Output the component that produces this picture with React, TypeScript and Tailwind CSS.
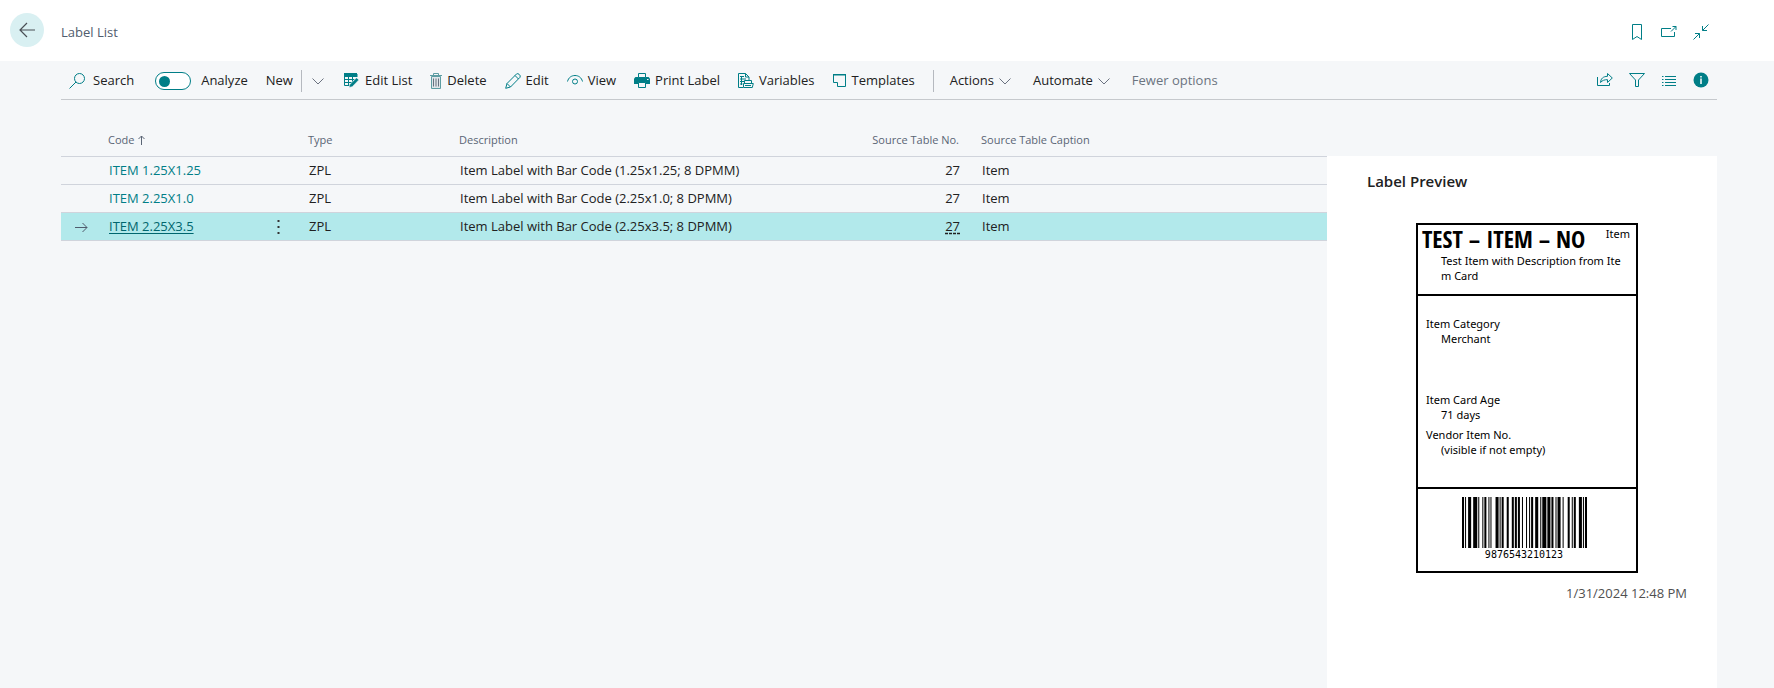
import type { ReactNode } from "react";

const svgProps = {
  width: 16,
  height: 16,
  viewBox: "0 0 16 16",
  fill: "none",
  stroke: "currentColor",
  strokeWidth: 1,
  "aria-hidden": true,
} as const;

const SearchIcon = () => (
  <svg {...svgProps}>
    <circle cx="10.5" cy="5.5" r="5" />
    <path d="M7 9 .5 15.5" />
  </svg>
);

const EditListIcon = () => (
  <svg {...svgProps}>
    <path d="M.5 1v11.5H7M.5 6.5h10M.5 9.5h8M4.5 4v8.5M8.500 4v6M13 1v3" />
    <path d="M0 0h13v4H0z" fill="currentColor" stroke="none" />
    <path d="m5 14.500.8-3L12.600 4.700l2.200 2.200-6.500 6.800z" fill="currentColor" stroke="#f5f7f9" strokeWidth=".6" />
  </svg>
);

const TrashIcon = () => (
  <svg {...svgProps} width={12} viewBox="0 0 12 16">
    <path d="M1.500 3.500h9v12h-9z" fill="#dfe6ea" stroke="#5d9da3" />
    <path d="M0 2.500h12M3.500 2V.5h5V2" stroke="#5d9da3" />
    <path d="M3.500 5.500v8M6 5.500v8M8.500 5.500v8" stroke="#66717f" />
  </svg>
);

const PencilIcon = () => (
  <svg {...svgProps}>
    <path d="M.7 15.300 2 10.500 11.600.9q1.200-.8 2.600.5 1.700 1.500.8 2.900L5.500 14zM2 10.500 5.500 14M10 2.500 13.500 6" />
  </svg>
);

const EyeIcon = () => (
  <svg {...svgProps}>
    <path d="M.5 8.500C1.500 4.500 4.500 2.500 8 2.500s6.500 2 7.500 6" />
    <circle cx="8" cy="8.500" r="2.500" />
  </svg>
);

const PrinterIcon = () => (
  <svg {...svgProps}>
    <path d="M1.500 4h13L16 5.500V11H0V5.500z" fill="currentColor" stroke="none" />
    <path d="M4.500.5h7v4h-7zM4.500 9.500h7v5h-7z" fill="#f5f7f9" />
    <path d="M13 6.500h1.500" stroke="#f5f7f9" />
  </svg>
);

const VariablesIcon = () => (
  <svg {...svgProps}>
    <path d="M5 14.500H.5V.5h7l3.500 3.500v3M7.500.5V4H11" />
    <path d="M2 3.500h4M2 6h6M2 8.500h4M2 11h2.500M3.500 3v9" />
    <path d="M6.500 10V7.500h7V10M5.500 10.500h9.800l-1 4H5.500z" fill="#f5f7f9" />
    <path d="M7 12.500h6" />
  </svg>
);

const TemplateIcon = () => (
  <svg {...svgProps} width={14} viewBox="0 0 14 16">
    <path d="M.5 1.500h12v12h-8v-4h-4z" />
    <path d="M0 1h13v1.500H0z" fill="currentColor" stroke="none" />
  </svg>
);

const Chevron = () => (
  <svg {...svgProps} width={12} height={8} viewBox="0 0 12 8" className="text-[#6b7280]">
    <path d="m.5 1.500 5.500 5.500 5.500-5.500" />
  </svg>
);

const BookmarkIcon = () => (
  <svg {...svgProps}>
    <path d="M3.500.5h9v15L8 12.500l-4.500 3z" />
  </svg>
);

const PopOutIcon = () => (
  <svg {...svgProps}>
    <path d="M10 4.500H.5v8h13V8M10 7.500l5-5M11.500 2.500H15V6" />
  </svg>
);

const CollapseIcon = () => (
  <svg {...svgProps}>
    <path d="M15.500.5 9.500 6.500M9.500 2v4.500H14M.5 15.500l6-6M2 9.500h4.500V14" />
  </svg>
);

const ShareIcon = () => (
  <svg {...svgProps}>
    <path d="M.5 5v8.500h12V11" />
    <path d="M3.500 10.500c.4-4 2.500-6 7-6.200V1.500L15.300 6l-4.800 4.500V7.700c-3-.1-5 .6-7 2.800z" />
  </svg>
);

const FilterIcon = () => (
  <svg {...svgProps}>
    <path d="M.5 1.500h15l-6 6.500v6.500h-3V8z" />
  </svg>
);

const ListIcon = () => (
  <svg {...svgProps}>
    <path d="M1 4.500h1.500M1 7.500h1.500M1 10.500h1.500M1 13.500h1.500M4 4.500h11M4 7.500h11M4 10.500h11M4 13.500h11" />
  </svg>
);

const InfoIcon = () => (
  <svg {...svgProps}>
    <circle cx="8" cy="8" r="7.500" fill="currentColor" stroke="none" />
    <path d="M8 6.500V12M8 4v1.500" stroke="#fff" strokeWidth="1.500" />
  </svg>
);

function ToolButton({ icon, children }: { icon?: ReactNode; children: ReactNode }) {
  return (
    <button type="button" className="flex items-center gap-[5px] whitespace-nowrap">
      {icon && <span className="text-[#007e87]">{icon}</span>}
      {children}
    </button>
  );
}

function IconButton({ label, children }: { label: string; children: ReactNode }) {
  return (
    <button type="button" aria-label={label} className="text-[#007e87]">
      {children}
    </button>
  );
}

const rows = [
  { code: "ITEM 1.25X1.25", type: "ZPL", description: "Item Label with Bar Code (1.25x1.25; 8 DPMM)", tableNo: 27, caption: "Item" },
  { code: "ITEM 2.25X1.0", type: "ZPL", description: "Item Label with Bar Code (2.25x1.0; 8 DPMM)", tableNo: 27, caption: "Item" },
  { code: "ITEM 2.25X3.5", type: "ZPL", description: "Item Label with Bar Code (2.25x3.5; 8 DPMM)", tableNo: 27, caption: "Item", selected: true },
];

// Code 128 element widths: start C, 98 76 54 32 10 12, code B, 3, check, stop
const barWidths =
  "211232" + "411311" + "221114" + "311123" + "232121" + "221312" + "112232" + "114131" + "221132" + "142211" + "2331112";

function Barcode() {
  let x = 0;
  const bars: ReactNode[] = [];
  barWidths.split("").forEach((w, i) => {
    if (i % 2 === 0) bars.push(<rect key={i} x={x} y="0" width={Number(w)} height="51" />);
    x += Number(w);
  });
  return (
    <svg width="125" height="51" viewBox={`0 0 ${x} 51`} preserveAspectRatio="none" role="img" aria-label="Barcode">
      {bars}
    </svg>
  );
}

function LabelPreview() {
  return (
    <div className="mx-auto w-[222px] border-2 border-black font-['Noto_Sans',sans-serif] text-[11px] leading-[15px] text-black">
      <div className="h-[71px] border-b-2 border-black">
        <div className="flex items-start justify-between pr-1.5 pl-1">
          <span className="pt-0.5 pb-px font-['Open_Sans_Condensed','Roboto_Condensed','Roboto',sans-serif] text-[24px] leading-[24px] font-bold whitespace-nowrap">
            TEST – ITEM – NO
          </span>
          <span className="pt-px">Item</span>
        </div>
        <div className="pt-px pl-[23px] whitespace-nowrap">
          Test Item with Description from Ite
          <br />m Card
        </div>
      </div>
      <div className="h-[193px] border-b-2 border-black pt-5 pl-2">
        <p>Item Category</p>
        <p className="pl-[15px]">Merchant</p>
        <p className="pt-[46px]">Item Card Age</p>
        <p className="pl-[15px]">71 days</p>
        <p className="pt-[5px]">Vendor Item No.</p>
        <p className="pl-[15px]">(visible if not empty)</p>
      </div>
      <div className="flex h-[82px] flex-col items-center pt-2 pr-1.5">
        <Barcode />
        <span className="font-['DejaVu_Sans_Mono',monospace] text-[10px] leading-[14px]">9876543210123</span>
      </div>
    </div>
  );
}

export default function App() {
  return (
    <div className="flex min-h-screen flex-col bg-[#f5f7f9] font-['Open_Sans','Noto_Sans',sans-serif] text-[13px] text-[#212121]">
      <header className="flex h-[61px] items-center bg-white pr-[65px] pb-px pl-2.5">
        <button
          type="button"
          aria-label="Back"
          className="flex size-[34px] items-center justify-center rounded-full bg-[#d9f0f2] text-[#4a4f55]"
        >
          <svg {...svgProps} strokeWidth={1.2}>
            <path d="M16 8H1M8 1 1 8l7 7" />
          </svg>
        </button>
        <h1 className="ml-[17px] flex-1 pt-1.5 text-[#505c6d]">Label List</h1>
        <div className="flex items-center gap-4 pt-1">
          <IconButton label="Bookmark"><BookmarkIcon /></IconButton>
          <IconButton label="Open in new window"><PopOutIcon /></IconButton>
          <IconButton label="Collapse"><CollapseIcon /></IconButton>
        </div>
      </header>

      <div className="mr-[57px] ml-[61px] flex flex-1 flex-col">
        <div className="flex h-[39px] items-center justify-between border-b border-[#c6c9cd] px-2">
          <div className="flex items-center gap-[18px] pt-0.5">
            <button type="button" className="mr-[3px] flex items-center gap-2">
              <span className="text-[#007e87]"><SearchIcon /></span>
              Search
            </button>
            <label className="flex items-center gap-2.5">
              <input type="checkbox" role="switch" className="peer sr-only" />
              <span className="flex h-[18px] w-9 items-center rounded-full border border-[#007e87] bg-white px-[3px]">
                <span className="size-[11px] rounded-full bg-[#007e87]" />
              </span>
              Analyze
            </label>
            <div className="mr-0.5 flex items-center">
              <button type="button" className="pr-2">New</button>
              <button type="button" aria-label="More new options" className="flex h-[22px] items-center border-l border-[#b5b9bf] pl-2.5">
                <Chevron />
              </button>
            </div>
            <ToolButton icon={<EditListIcon />}>Edit List</ToolButton>
            <ToolButton icon={<TrashIcon />}>Delete</ToolButton>
            <ToolButton icon={<PencilIcon />}>Edit</ToolButton>
            <ToolButton icon={<EyeIcon />}>View</ToolButton>
            <ToolButton icon={<PrinterIcon />}>Print Label</ToolButton>
            <ToolButton icon={<VariablesIcon />}>Variables</ToolButton>
            <ToolButton icon={<TemplateIcon />}>Templates</ToolButton>
            <div className="flex h-[22px] items-center gap-[22px] border-l border-[#b5b9bf] pl-4">
              <ToolButton>Actions <Chevron /></ToolButton>
              <ToolButton>Automate <Chevron /></ToolButton>
              <button type="button" className="whitespace-nowrap text-[#6b7480]">Fewer options</button>
            </div>
          </div>
          <div className="flex items-center gap-4">
            <IconButton label="Share"><ShareIcon /></IconButton>
            <IconButton label="Filter"><FilterIcon /></IconButton>
            <IconButton label="Show as list"><ListIcon /></IconButton>
            <IconButton label="Details"><InfoIcon /></IconButton>
          </div>
        </div>

        <div className="flex flex-1">
          <main className="flex-1">
            <table className="w-full table-fixed border-collapse text-left">
              <colgroup>
                <col className="w-10" />
                <col className="w-[152px]" />
                <col className="w-12" />
                <col className="w-[151px]" />
                <col className="w-[386px]" />
                <col className="w-32" />
                <col />
              </colgroup>
              <thead>
                <tr className="h-14 border-b border-[#d0d4dc] align-bottom text-[11px] leading-[16px] text-[#5a6575] [&>th]:px-[7px] [&>th]:pb-2 [&>th]:font-normal">
                  <th aria-label="Selected" />
                  <th>
                    <span className="flex items-center gap-1">
                      Code
                      <svg {...svgProps} width={7} height={10} viewBox="0 0 7 10">
                        <path d="M3.500 10V1M.5 4l3-3 3 3" />
                      </svg>
                    </span>
                  </th>
                  <th aria-label="Row menu" />
                  <th>Type</th>
                  <th>Description</th>
                  <th className="text-right">Source Table No.</th>
                  <th><span className="pl-2">Source Table Caption</span></th>
                </tr>
              </thead>
              <tbody>
                {rows.map((row) => (
                  <tr
                    key={row.code}
                    className={`h-7 border-b border-[#d0d4dc] [&>td]:pt-0.5 [&>td]:pr-1.5 [&>td]:pb-0 [&>td]:pl-2 ${row.selected ? "bg-[#b2e9eb]" : ""}`}
                  >
                    <td>
                      {row.selected && (
                        <svg {...svgProps} width={13} height={11} viewBox="0 0 13 11" className="ml-1.5 text-[#505c6d]">
                          <path d="M0 5.500h12M7.500 1l4.500 4.500L7.500 10" />
                        </svg>
                      )}
                    </td>
                    <td className="whitespace-nowrap">
                      <a href="#" className={row.selected ? "text-[#00666e] underline underline-offset-2" : "text-[#007e87]"}>
                        {row.code}
                      </a>
                    </td>
                    <td>
                      {row.selected && (
                        <button type="button" aria-label="More options" className="ml-4 block">
                          <svg width="3" height="14" viewBox="0 0 3 14" fill="#333" aria-hidden="true">
                            <path d="M.5 0h2v2h-2zM.5 6h2v2h-2zM.5 12h2v2h-2z" />
                          </svg>
                        </button>
                      )}
                    </td>
                    <td>{row.type}</td>
                    <td>{row.description}</td>
                    <td className="text-right">
                      <span className={row.selected ? "underline decoration-dashed underline-offset-2" : ""}>{row.tableNo}</span>
                    </td>
                    <td><span className="pl-2">{row.caption}</span></td>
                  </tr>
                ))}
              </tbody>
            </table>
          </main>

          <aside className="mt-14 w-[390px] bg-white pt-[15px] pr-[30px] pl-10">
            <h2 className="mb-8 text-[15px] leading-[20px] font-semibold">Label Preview</h2>
            <LabelPreview />
            <p className="mt-2.5 text-right leading-[20px] text-[#505050]">1/31/2024 12:48 PM</p>
          </aside>
        </div>
      </div>
    </div>
  );
}
